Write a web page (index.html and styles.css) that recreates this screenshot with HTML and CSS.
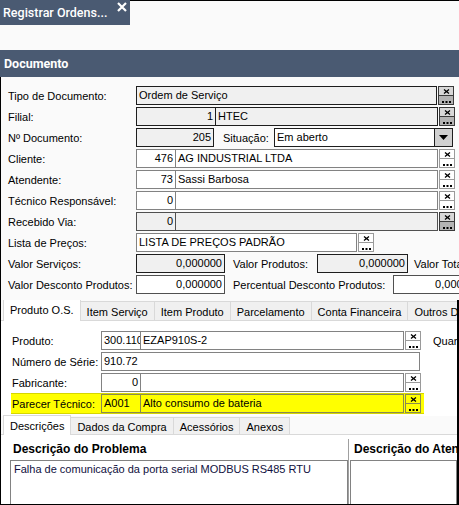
FILE: index.html
```html
<!DOCTYPE html>
<html lang="pt-BR">
<head>
<meta charset="utf-8">
<title>Registrar Ordens de Serviço</title>
<link rel="stylesheet" href="styles.css">
</head>
<body>
<div class="win">
  <div class="topbar">
    <div class="doctab">
      <span class="doctab-title">Registrar Ordens...</span>
      <svg class="close" width="10" height="10" viewBox="0 0 10 10"><path d="M1 1 L9 9 M9 1 L1 9" stroke="#fff" stroke-width="2.2"/></svg>
    </div>
    <div class="topfill"></div>
  </div>
  <div class="gap"></div>
  <div class="section-head">Documento</div>
  <div class="frame">
    <div class="form">
      <div class="row"><span class="lbl">Tipo de Documento:</span><div class="f ro w301">Ordem de Serviço</div><div class="btn ro"><div class="b"><svg width="7" height="5" viewBox="0 0 7 5"><path d="M1 0.5 L6 4.5 M6 0.5 L1 4.5" stroke="#000" stroke-width="1.3"/></svg></div><div class="b dots"><svg width="9" height="2" viewBox="0 0 9 2"><rect x="0" y="0" width="2" height="2"/><rect x="3.5" y="0" width="2" height="2"/><rect x="7" y="0" width="2" height="2"/></svg></div></div></div>
      <div class="row"><span class="lbl">Filial:</span><div class="f ro num w80">1</div><div class="f ro w223">HTEC</div><div class="btn ro"><div class="b"><svg width="7" height="5" viewBox="0 0 7 5"><path d="M1 0.5 L6 4.5 M6 0.5 L1 4.5" stroke="#000" stroke-width="1.3"/></svg></div><div class="b dots"><svg width="9" height="2" viewBox="0 0 9 2"><rect x="0" y="0" width="2" height="2"/><rect x="3.5" y="0" width="2" height="2"/><rect x="7" y="0" width="2" height="2"/></svg></div></div></div>
      <div class="row"><span class="lbl">Nº Documento:</span><div class="f ro num w78">205</div><span class="lbl2 sit">Situação:</span><div class="sel"><span class="sel-text">Em aberto</span><span class="sel-arrow"><svg width="9" height="5" viewBox="0 0 9 5"><path d="M0 0 H9 L4.5 5 Z" fill="#000"/></svg></span></div></div>
      <div class="row"><span class="lbl">Cliente:</span><div class="f num w40">476</div><div class="f w263">AG INDUSTRIAL LTDA</div><div class="btn"><div class="b"><svg width="7" height="5" viewBox="0 0 7 5"><path d="M1 0.5 L6 4.5 M6 0.5 L1 4.5" stroke="#000" stroke-width="1.3"/></svg></div><div class="b dots"><svg width="9" height="2" viewBox="0 0 9 2"><rect x="0" y="0" width="2" height="2"/><rect x="3.5" y="0" width="2" height="2"/><rect x="7" y="0" width="2" height="2"/></svg></div></div></div>
      <div class="row"><span class="lbl">Atendente:</span><div class="f num w40">73</div><div class="f w263">Sassi Barbosa</div><div class="btn"><div class="b"><svg width="7" height="5" viewBox="0 0 7 5"><path d="M1 0.5 L6 4.5 M6 0.5 L1 4.5" stroke="#000" stroke-width="1.3"/></svg></div><div class="b dots"><svg width="9" height="2" viewBox="0 0 9 2"><rect x="0" y="0" width="2" height="2"/><rect x="3.5" y="0" width="2" height="2"/><rect x="7" y="0" width="2" height="2"/></svg></div></div></div>
      <div class="row"><span class="lbl">Técnico Responsável:</span><div class="f num w40">0</div><div class="f w263"></div><div class="btn"><div class="b"><svg width="7" height="5" viewBox="0 0 7 5"><path d="M1 0.5 L6 4.5 M6 0.5 L1 4.5" stroke="#000" stroke-width="1.3"/></svg></div><div class="b dots"><svg width="9" height="2" viewBox="0 0 9 2"><rect x="0" y="0" width="2" height="2"/><rect x="3.5" y="0" width="2" height="2"/><rect x="7" y="0" width="2" height="2"/></svg></div></div></div>
      <div class="row"><span class="lbl">Recebido Via:</span><div class="f ro2 num w40">0</div><div class="f ro2 w263"></div><div class="btn ro"><div class="b"><svg width="7" height="5" viewBox="0 0 7 5"><path d="M1 0.5 L6 4.5 M6 0.5 L1 4.5" stroke="#000" stroke-width="1.3"/></svg></div><div class="b dots"><svg width="9" height="2" viewBox="0 0 9 2"><rect x="0" y="0" width="2" height="2"/><rect x="3.5" y="0" width="2" height="2"/><rect x="7" y="0" width="2" height="2"/></svg></div></div></div>
      <div class="row"><span class="lbl">Lista de Preços:</span><div class="f w221">LISTA DE PREÇOS PADRÃO</div><div class="btn"><div class="b"><svg width="7" height="5" viewBox="0 0 7 5"><path d="M1 0.5 L6 4.5 M6 0.5 L1 4.5" stroke="#000" stroke-width="1.3"/></svg></div><div class="b dots"><svg width="9" height="2" viewBox="0 0 9 2"><rect x="0" y="0" width="2" height="2"/><rect x="3.5" y="0" width="2" height="2"/><rect x="7" y="0" width="2" height="2"/></svg></div></div></div>
      <div class="row"><span class="lbl">Valor Serviços:</span><div class="f ro num w89">0,000000</div><span class="lbl2 w84">Valor Produtos:</span><div class="f ro num w91">0,000000</div><span class="lbl2 tot">Valor Total:</span></div>
      <div class="row"><span class="lbl">Valor Desconto Produtos:</span><div class="f dk num w89">0,000000</div><span class="lbl2 w160">Percentual Desconto Produtos:</span><div class="f dk num w91">0,000000</div></div>
    </div>

    <div class="lower">
      <div class="tabs">
        <div class="tab active">Produto O.S.</div>
        <div class="tab">Item Serviço</div>
        <div class="tab">Item Produto</div>
        <div class="tab">Parcelamento</div>
        <div class="tab">Conta Financeira</div>
        <div class="tab">Outros Dados</div>
      </div>
      <div class="panel">
        <div class="prow"><span class="plbl">Produto:</span><div class="f w40 clip">300.110</div><div class="f w264">EZAP910S-2</div><div class="btn"><div class="b"><svg width="7" height="5" viewBox="0 0 7 5"><path d="M1 0.5 L6 4.5 M6 0.5 L1 4.5" stroke="#000" stroke-width="1.3"/></svg></div><div class="b dots"><svg width="9" height="2" viewBox="0 0 9 2"><rect x="0" y="0" width="2" height="2"/><rect x="3.5" y="0" width="2" height="2"/><rect x="7" y="0" width="2" height="2"/></svg></div></div><span class="quan">Quantidade:</span></div>
        <div class="prow"><span class="plbl">Número de Série:</span><div class="f w319">910.72</div></div>
        <div class="prow"><span class="plbl">Fabricante:</span><div class="f num w40">0</div><div class="f w264"></div><div class="btn"><div class="b"><svg width="7" height="5" viewBox="0 0 7 5"><path d="M1 0.5 L6 4.5 M6 0.5 L1 4.5" stroke="#000" stroke-width="1.3"/></svg></div><div class="b dots"><svg width="9" height="2" viewBox="0 0 9 2"><rect x="0" y="0" width="2" height="2"/><rect x="3.5" y="0" width="2" height="2"/><rect x="7" y="0" width="2" height="2"/></svg></div></div></div>
        <div class="prow hl"><span class="plbl">Parecer Técnico:</span><div class="f yl w40">A001</div><div class="f yl w264">Alto consumo de bateria</div><div class="btn yl"><div class="b"><svg width="7" height="5" viewBox="0 0 7 5"><path d="M1 0.5 L6 4.5 M6 0.5 L1 4.5" stroke="#000" stroke-width="1.3"/></svg></div><div class="b dots"><svg width="9" height="2" viewBox="0 0 9 2"><rect x="0" y="0" width="2" height="2"/><rect x="3.5" y="0" width="2" height="2"/><rect x="7" y="0" width="2" height="2"/></svg></div></div></div>
      </div>
      <div class="tabs sub">
        <div class="tab active">Descrições</div>
        <div class="tab">Dados da Compra</div>
        <div class="tab">Acessórios</div>
        <div class="tab">Anexos</div>
      </div>
      <div class="subpanel">
        <div class="col left">
          <div class="col-head">Descrição do Problema</div>
          <div class="memo">Falha de comunicação da porta serial MODBUS RS485 RTU</div>
        </div>
        <div class="col right">
          <div class="col-head">Descrição do Atendimento</div>
          <div class="memo"></div>
        </div>
      </div>
    </div>
  </div>
</div>
</body>
</html>
```

FILE: styles.css
```css
* { box-sizing: border-box; }
body {
  margin: 0;
  background: #fafafa;
  font-family: "Liberation Sans", Arial, sans-serif;
  font-size: 11px;
  color: #000;
}
.win {
  width: 459px;
  height: 505px;
  overflow: hidden;
  background: #fafafa;
}
.topbar { display: flex; height: 25px; }
.doctab {
  width: 130px;
  height: 25px;
  background: #4a5a72;
  color: #fff;
  display: flex;
  align-items: flex-start;
  padding-left: 3px;
  font-family: Roboto, "Liberation Sans", sans-serif;
  font-weight: 500;
  font-size: 12.5px;
}
.doctab-title { margin-top: 5px; white-space: nowrap; }
.close { margin-left: auto; margin-right: 3px; margin-top: 2px; flex: none; }
.topfill { flex: 1; border-top: 1px solid #000; }
.gap { height: 25px; }
.section-head {
  height: 27px;
  background: #4a5a72;
  color: #fff;
  font-family: Roboto, "Liberation Sans", sans-serif;
  font-weight: 700;
  font-size: 12.5px;
  padding-left: 4px;
  display: flex;
  align-items: center;
}
.frame {
  height: 428px;
  border-left: 1px solid #000;
  border-bottom: 1px solid #000;
  overflow: hidden;
}
.form { padding: 9px 0 0 7px; }
.row {
  display: flex;
  align-items: center;
  height: 19px;
  margin-bottom: 2px;
  white-space: nowrap;
}
.lbl { width: 128px; flex: none; }
.lbl2 { flex: none; }
.sit { margin-left: 9px; width: 51px; }
.w84 { margin-left: 8px; width: 84px; }
.w160 { margin-left: 8px; width: 160px; }
.tot { margin-left: 6px; }

.f {
  flex: none;
  height: 19px;
  border: 1px solid #828282;
  background: #fff;
  padding: 0 2px;
  line-height: 17px;
  white-space: nowrap;
  overflow: hidden;
}
.f + .f { margin-left: -1px; }
.ro { background: #f0f0f0; border-color: #1e1e1e; }
.ro2 { background: #f0f0f0; border-color: #505050; }
.dk { border-color: #505050; }
.num { text-align: right; }
.clip { text-overflow: clip; }
.w301 { width: 301px; }
.w80 { width: 80px; }
.w223 { width: 223px; }
.w78 { width: 78px; }
.w40 { width: 40px; }
.w263 { width: 263px; }
.w264 { width: 264px; }
.w221 { width: 221px; }
.w89 { width: 89px; }
.w91 { width: 91px; }
.w319 { width: 319px; }

.btn {
  flex: none;
  width: 16px;
  height: 19px;
  margin-left: 1px;
  display: flex;
  flex-direction: column;
}
.btn .b {
  height: 10px;
  border: 1px solid #9a9a9a;
  background: #fff;
  display: flex;
  align-items: center;
  justify-content: center;
}
.btn .b + .b { margin-top: -1px; }
.btn .b.dots { align-items: flex-end; padding-bottom: 1px; }
.btn.ro .b { background: #d8d8d8; border-color: #3a3a3a; }
.btn.ro .b.dots { background: #b4b4b4; }
.btn.yl .b { background: #ffff00; border-color: #8a8a50; }

.sel {
  flex: none;
  width: 179px;
  height: 19px;
  border: 1px solid #1e1e1e;
  background: #fff;
  display: flex;
}
.sel-text { flex: 1; padding-left: 2px; line-height: 17px; }
.sel-arrow {
  width: 18px;
  background: #d0d0d0;
  border-left: 1px solid #1e1e1e;
  display: flex;
  align-items: center;
  justify-content: center;
}

.lower {
  margin-top: 6px;
  border-right: 2px solid #000;
  height: 400px;
  overflow: hidden;
}
.tabs {
  display: flex;
  align-items: flex-end;
  height: 21px;
  padding-left: 2px;
  border-bottom: 1px solid #d9d9d9;
  white-space: nowrap;
}
.tab {
  flex: none;
  height: 19px;
  padding: 1px 6px 0;
  line-height: 18px;
  border: 1px solid #d9d9d9;
  border-bottom: none;
  background: #f0f0f0;
  margin-left: -1px;
}
.tab:first-child { margin-left: 0; }
.tab.active {
  height: 22px;
  margin-bottom: -1px;
  background: #fff;
  line-height: 19px;
  position: relative;
}
.panel {
  height: 95px;
  background: #fff;
  padding: 10px 0 0 11px;
}
.prow {
  display: flex;
  align-items: center;
  height: 19px;
  margin-bottom: 2px;
  white-space: nowrap;
}
.plbl { width: 89px; flex: none; }
.quan { margin-left: 12px; }
.prow.hl {
  margin-left: -1px;
  padding-left: 1px;
  width: 413px;
  height: 21px;
  margin-top: -1px;
  background: #ffff00;
  border-top: 1px solid #d6d600;
  border-bottom: 1px solid #d6d600;
}
.f.yl { background: #ffff00; border-color: #8a8a50; }
.tabs.sub { height: 19px; }
.tabs.sub .tab { height: 17px; line-height: 16px; }
.tabs.sub .tab.active { height: 20px; line-height: 18px; }
.subpanel {
  display: flex;
  background: #fff;
  height: 100px;
}
.col { flex: none; }
.col.left { width: 347px; padding: 6px 0 0 9px; }
.col.right {
  flex: 1;
  margin-top: 4px;
  border-left: 1px solid #a0a0a0;
  padding: 2px 0 0 1px;
  overflow: hidden;
}
.col-head {
  font-weight: 700;
  font-size: 12px;
  height: 19px;
  line-height: 16px;
  padding-left: 3px;
  white-space: nowrap;
}
.col.right .col-head { padding-left: 4px; }
.memo {
  height: 60px;
  border: 1px solid #828282;
  background: #fff;
  padding: 2px 3px;
  color: #101040;
  white-space: nowrap;
  overflow: hidden;
}
```
